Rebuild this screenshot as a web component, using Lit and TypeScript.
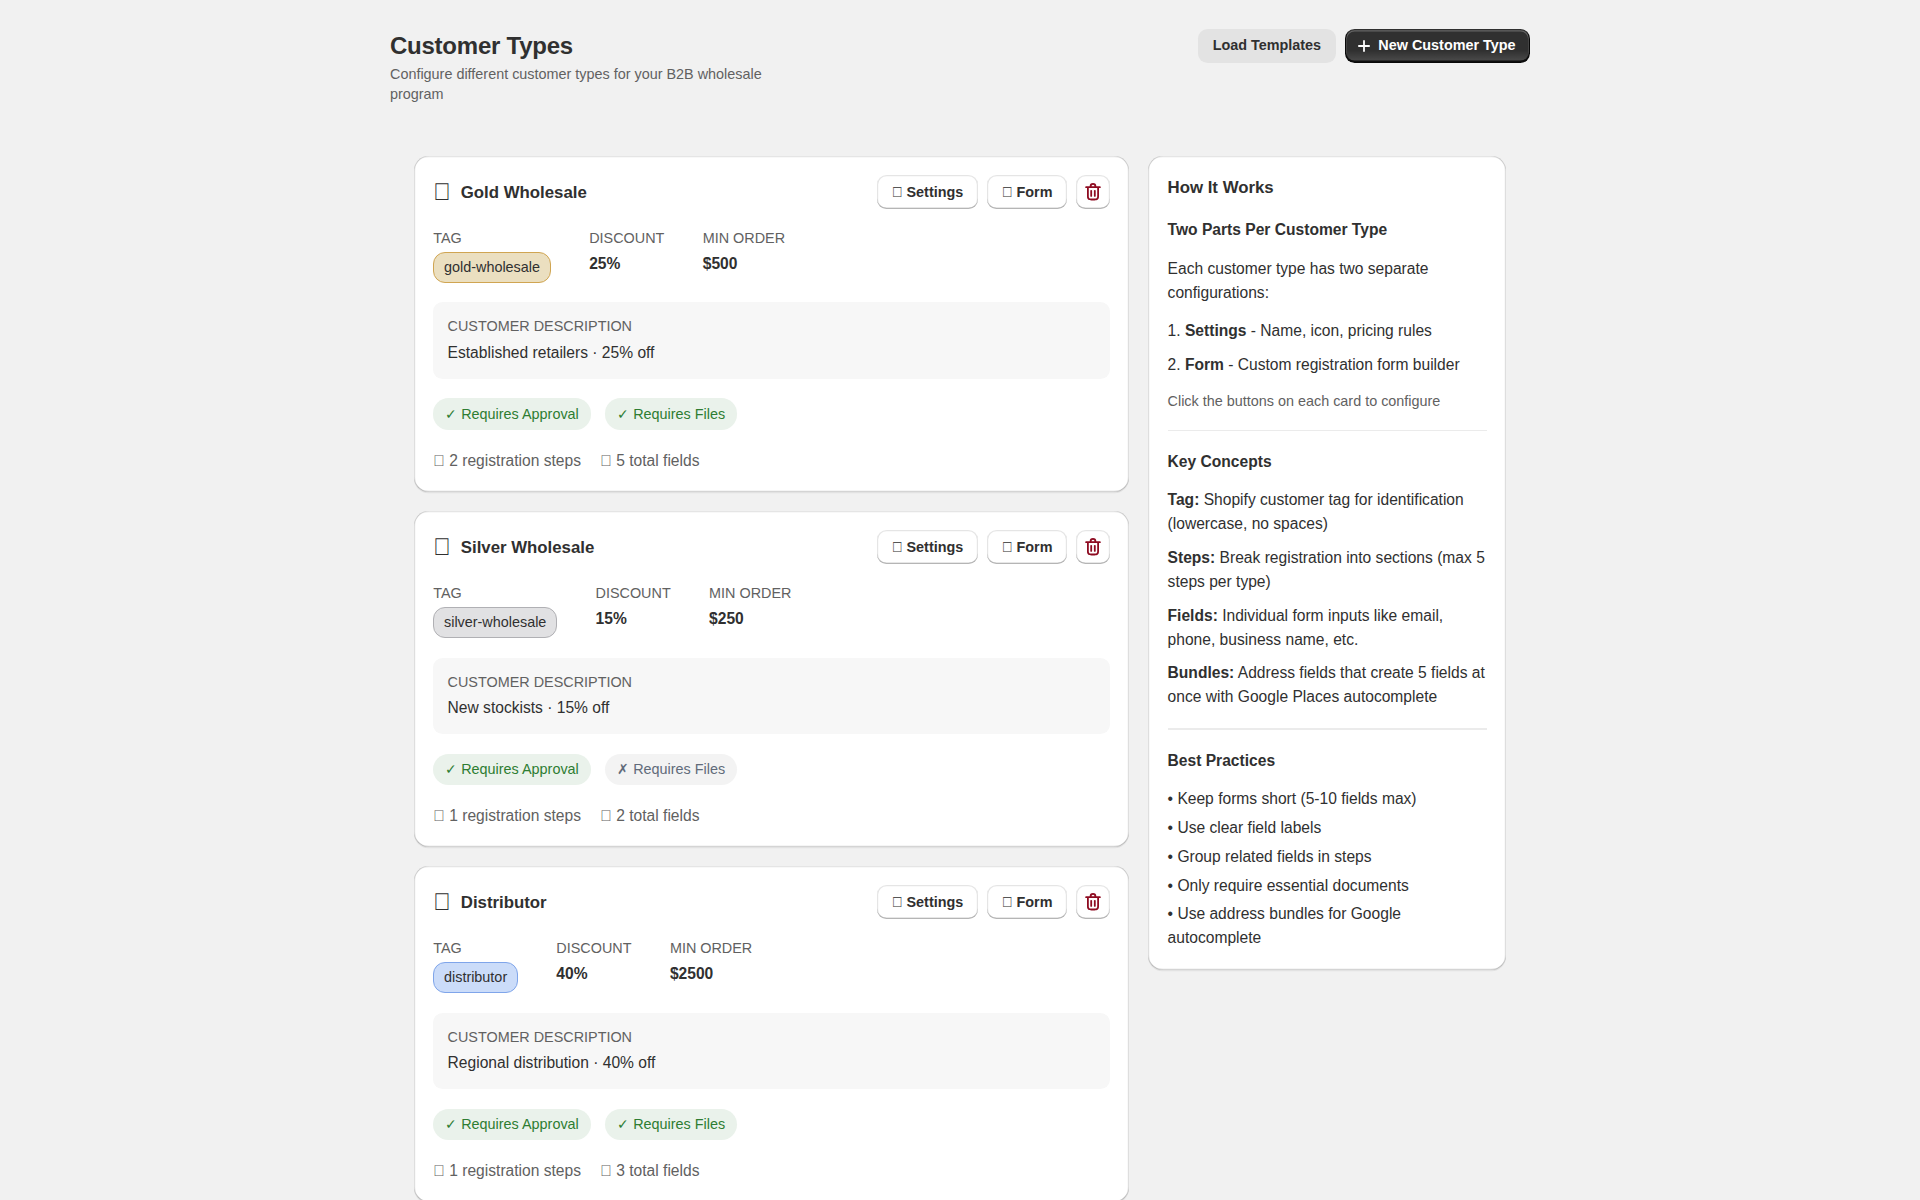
import { LitElement, html, css, svg } from "lit";
import { customElement, property } from "lit/decorators.js";
import { classMap } from "lit/directives/class-map.js";

interface CustomerType {
  name: string;
  tag: string;
  tone: "gold" | "silver" | "blue";
  discount: string;
  minOrder: string;
  description: string;
  approval: boolean;
  files: boolean;
  steps: number;
  fields: number;
}

// Private-use code point: drawn as the font's empty placeholder box.
const BOX = "\u{10FF00}";

const CUSTOMER_TYPES: CustomerType[] = [
  { name: "Gold Wholesale", tag: "gold-wholesale", tone: "gold", discount: "25%", minOrder: "$500", description: "Established retailers · 25% off", approval: true, files: true, steps: 2, fields: 5 },
  { name: "Silver Wholesale", tag: "silver-wholesale", tone: "silver", discount: "15%", minOrder: "$250", description: "New stockists · 15% off", approval: true, files: false, steps: 1, fields: 2 },
  { name: "Distributor", tag: "distributor", tone: "blue", discount: "40%", minOrder: "$2500", description: "Regional distribution · 40% off", approval: true, files: true, steps: 1, fields: 3 },
];

const CONCEPTS: [string, string][] = [
  ["Tag:", "Shopify customer tag for identification (lowercase, no spaces)"],
  ["Steps:", "Break registration into sections (max 5 steps per type)"],
  ["Fields:", "Individual form inputs like email, phone, business name, etc."],
  ["Bundles:", "Address fields that create 5 fields at once with Google Places autocomplete"],
];

const PRACTICES = [
  "Keep forms short (5-10 fields max)",
  "Use clear field labels",
  "Group related fields in steps",
  "Only require essential documents",
  "Use address bundles for Google autocomplete",
];

const plusIcon = svg`<path d="M10.75 5.75a.75.75 0 0 0-1.5 0v3.5h-3.5a.75.75 0 0 0 0 1.5h3.5v3.5a.75.75 0 0 0 1.5 0v-3.5h3.5a.75.75 0 0 0 0-1.5h-3.5v-3.5Z"/>`;

const trashIcon = svg`
  <path d="M11.5 8.25a.75.75 0 0 1 .75.75v4.25a.75.75 0 0 1-1.5 0v-4.25a.75.75 0 0 1 .75-.75Z"/>
  <path d="M9.25 9a.75.75 0 0 0-1.5 0v4.25a.75.75 0 0 0 1.5 0v-4.25Z"/>
  <path fill-rule="evenodd" d="M7.25 5.25a2.75 2.75 0 0 1 5.5 0h3a.75.75 0 0 1 0 1.5h-.75v5.45c0 1.68 0 2.52-.327 3.162a3 3 0 0 1-1.311 1.311c-.642.327-1.482.327-3.162.327h-.4c-1.68 0-2.52 0-3.162-.327a3 3 0 0 1-1.311-1.311c-.327-.642-.327-1.482-.327-3.162v-5.45h-.75a.75.75 0 0 1 0-1.5h3Zm1.5 0a1.25 1.25 0 1 1 2.5 0h-2.5Zm-2.25 1.5h7v5.45c0 .865-.001 1.423-.036 1.848-.033.408-.09.559-.128.633a1.5 1.5 0 0 1-.655.655c-.074.038-.225.095-.633.128-.425.035-.983.036-1.848.036h-.4c-.865 0-1.423-.001-1.848-.036-.408-.033-.559-.09-.633-.128a1.5 1.5 0 0 1-.656-.655c-.037-.074-.094-.225-.127-.633-.035-.425-.036-.983-.036-1.848v-5.45Z"/>`;

const shared = css`
  * {
    box-sizing: border-box;
  }
  h1, h2, h3, p {
    margin: 0;
  }
  button {
    appearance: none;
    border: 0;
    margin: 0;
    height: 28px;
    padding: 0.6px 12px 0;
    border-radius: 8px;
    display: flex;
    align-items: center;
    justify-content: center;
    font: bold 12px/16px "Liberation Sans", Arial, sans-serif;
    color: #303030;
    white-space: nowrap;
    cursor: pointer;
  }
  svg {
    display: block;
    width: 20px;
    height: 20px;
    fill: currentColor;
  }
  .card {
    background: #fff;
    border-radius: 12px;
    padding: 16px;
    box-shadow:
      inset 1px 0 0 rgba(0, 0, 0, 0.13),
      inset -1px 0 0 rgba(0, 0, 0, 0.13),
      inset 0 -1px 0 rgba(0, 0, 0, 0.17),
      inset 0 1px 0 rgba(204, 204, 204, 0.5),
      0 1px 0 rgba(26, 26, 26, 0.07);
  }
  .subdued {
    color: #616161;
  }
  .small {
    font-size: 12px;
    line-height: 16px;
  }
  .small.subdued {
    padding-top: 0.5px;
    margin-bottom: -0.5px;
  }
  .heading {
    font-size: 14px;
    line-height: 20px;
    font-weight: bold;
    padding-top: 0.5px;
    margin-bottom: -0.5px;
  }
`;

@customElement("customer-type-card")
export class CustomerTypeCard extends LitElement {
  @property({ attribute: false }) type!: CustomerType;

  static styles = [
    shared,
    css`
      :host {
        display: block;
      }
      .card {
        display: flex;
        flex-direction: column;
        gap: 16px;
      }
      .top, .title, .actions, .facts, .badges, .counts {
        display: flex;
      }
      .top {
        justify-content: space-between;
        align-items: center;
      }
      .title {
        align-items: center;
        gap: 8px;
      }
      .emoji {
        font-size: 20px;
        line-height: 20px;
      }
      .actions {
        gap: 8px;
      }
      .secondary {
        background: #fff;
        box-shadow:
          inset 0 -1px 0 0 #b5b5b5,
          inset 0 0 0 1px rgba(0, 0, 0, 0.1),
          inset 0 0.5px 0 1.5px #fff;
      }
      .icon-only {
        width: 28px;
        padding: 0;
        color: #8e0b21;
      }
      .facts {
        gap: 32px;
        align-items: flex-start;
      }
      .fact {
        display: flex;
        flex-direction: column;
        align-items: flex-start;
        gap: 4px;
      }
      .value {
        font-weight: bold;
      }
      .tag {
        padding: 4.34px 8.17px 4px;
        border: 1px solid;
        border-radius: 10px;
      }
      .gold {
        background: #ebdfc0;
        border-color: #d0a552;
      }
      .silver {
        background: #e1e1e3;
        border-color: #b0b0b4;
      }
      .blue {
        background: #cbdcf9;
        border-color: #7fa5ea;
      }
      .description {
        display: flex;
        flex-direction: column;
        gap: 4px;
        padding: 12px;
        border-radius: 8px;
        background: #f7f7f7;
      }
      .badges {
        gap: 12px;
      }
      .badge {
        padding: 5.5px 10px 4.5px;
        border-radius: 13px;
        background: #f3f3f3;
        color: #616b7a;
      }
      .on {
        background: #eaf2eb;
        color: #2e7d32;
      }
      .counts {
        gap: 16px;
        padding-top: 0.3px;
        margin-bottom: -0.3px;
      }
    `,
  ];

  private badge(on: boolean, label: string) {
    return html`<span class=${classMap({ badge: true, small: true, on })}>${on ? "✓" : "✗"} ${label}</span>`;
  }

  render() {
    const t = this.type;
    return html`
      <section class="card">
        <div class="top">
          <div class="title">
            <span class="emoji">${BOX}</span>
            <h2 class="heading">${t.name}</h2>
          </div>
          <div class="actions">
            <button class="secondary">${BOX} Settings</button>
            <button class="secondary">${BOX} Form</button>
            <button class="secondary icon-only" aria-label="Delete"><svg viewBox="0 0 20 20">${trashIcon}</svg></button>
          </div>
        </div>
        <div class="facts">
          <div class="fact">
            <span class="small subdued">TAG</span>
            <span class="tag small ${t.tone}">${t.tag}</span>
          </div>
          <div class="fact">
            <span class="small subdued">DISCOUNT</span>
            <span class="value">${t.discount}</span>
          </div>
          <div class="fact">
            <span class="small subdued">MIN ORDER</span>
            <span class="value">${t.minOrder}</span>
          </div>
        </div>
        <div class="description">
          <span class="small subdued">CUSTOMER DESCRIPTION</span>
          <span>${t.description}</span>
        </div>
        <div class="badges">
          ${this.badge(t.approval, "Requires Approval")} ${this.badge(t.files, "Requires Files")}
        </div>
        <div class="counts subdued">
          <span>${BOX} ${t.steps} registration steps</span>
          <span>${BOX} ${t.fields} total fields</span>
        </div>
      </section>
    `;
  }
}

@customElement("help-panel")
export class HelpPanel extends LitElement {
  static styles = [
    shared,
    css`
      :host {
        display: block;
      }
      .card, .section, .group {
        display: flex;
        flex-direction: column;
      }
      .card {
        gap: 16px;
      }
      .section {
        gap: 12px;
      }
      .group {
        gap: 8px;
      }
      .tight {
        gap: 4px;
      }
      h3 {
        font-size: 13px;
        line-height: 20px;
      }
      .divider {
        height: 1px;
        background: #ebebeb;
      }
    `,
  ];

  render() {
    return html`
      <aside class="card">
        <h2 class="heading">How It Works</h2>
        <div class="section">
          <h3>Two Parts Per Customer Type</h3>
          <p>Each customer type has two separate configurations:</p>
          <div class="group">
            <p>1. <b>Settings</b> - Name, icon, pricing rules</p>
            <p>2. <b>Form</b> - Custom registration form builder</p>
          </div>
          <p class="small subdued">Click the buttons on each card to configure</p>
        </div>
        <div class="divider"></div>
        <div class="section">
          <h3>Key Concepts</h3>
          <div class="group">${CONCEPTS.map(([term, text]) => html`<p><b>${term}</b> ${text}</p>`)}</div>
        </div>
        <div class="divider"></div>
        <div class="section">
          <h3>Best Practices</h3>
          <div class="group tight">${PRACTICES.map((text) => html`<p>• ${text}</p>`)}</div>
        </div>
      </aside>
    `;
  }
}

@customElement("app-root")
export class AppRoot extends LitElement {
  static styles = [
    shared,
    css`
      :host {
        display: block;
        zoom: 1.2;
        height: 1000px;
        overflow: hidden;
        background: #f1f1f1;
        color: #303030;
        font: 13px/20px "Liberation Sans", Arial, sans-serif;
      }
      .page {
        width: 950px;
        margin: 0 auto;
        padding-top: 24.1px;
      }
      .header {
        display: flex;
        justify-content: space-between;
        align-items: flex-start;
      }
      .intro {
        display: flex;
        flex-direction: column;
        gap: 3.6px;
        max-width: 340px;
        padding-top: 2.4px;
      }
      h1 {
        font-size: 20px;
        line-height: 24px;
        letter-spacing: -0.2px;
      }
      .actions {
        display: flex;
        gap: 8px;
      }
      .plain {
        background: #e3e3e3;
      }
      .primary {
        padding-left: 6px;
        gap: 1.7px;
        color: #fff;
        background:
          linear-gradient(180deg, rgba(48, 48, 48, 0) 63.53%, rgba(255, 255, 255, 0.15) 100%),
          #303030;
        box-shadow:
          inset 0 -1px 0 1px rgba(0, 0, 0, 0.8),
          inset 0 0 0 1px #303030,
          inset 0 0.5px 0 1.5px rgba(255, 255, 255, 0.25);
      }
      .columns {
        display: grid;
        grid-template-columns: 2fr 1fr;
        gap: 16px;
        align-items: start;
        padding: 44px 20px 20px;
      }
      .list {
        display: grid;
        gap: 16px;
      }
    `,
  ];

  render() {
    return html`
      <main class="page">
        <header class="header">
          <div class="intro">
            <h1>Customer Types</h1>
            <p class="small subdued">Configure different customer types for your B2B wholesale program</p>
          </div>
          <div class="actions">
            <button class="plain">Load Templates</button>
            <button class="primary"><svg viewBox="0 0 20 20">${plusIcon}</svg>New Customer Type</button>
          </div>
        </header>
        <div class="columns">
          <div class="list">
            ${CUSTOMER_TYPES.map((type) => html`<customer-type-card .type=${type}></customer-type-card>`)}
          </div>
          <help-panel></help-panel>
        </div>
      </main>
    `;
  }
}
